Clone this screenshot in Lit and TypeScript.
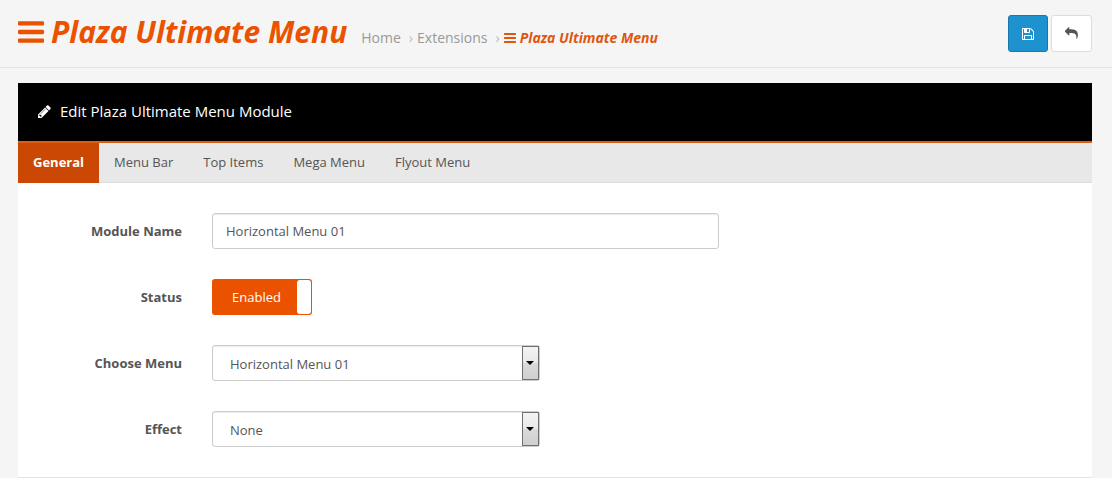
import { LitElement, html, css, svg } from "lit";
import { customElement, state } from "lit/decorators.js";

const paths = {
  bars: "M1664 1344v128q0 26-19 45t-45 19h-1408q-26 0-45-19t-19-45v-128q0-26 19-45t45-19h1408q26 0 45 19t19 45zm0-512v128q0 26-19 45t-45 19h-1408q-26 0-45-19t-19-45v-128q0-26 19-45t45-19h1408q26 0 45 19t19 45zm0-512v128q0 26-19 45t-45 19h-1408q-26 0-45-19t-19-45v-128q0-26 19-45t45-19h1408q26 0 45 19t19 45z",
  save: "M512 1536h768v-384h-768v384zm896 0h128v-896q0-14-10-38.5t-20-34.5l-281-281q-10-10-34-20t-39-10v416q0 40-28 68t-68 28h-576q-40 0-68-28t-28-68v-416h-128v1280h128v-416q0-40 28-68t68-28h832q40 0 68 28t28 68v416zm-384-928v-320q0-13-9.5-22.5t-22.5-9.5h-192q-13 0-22.5 9.5t-9.5 22.5v320q0 13 9.5 22.5t22.5 9.5h192q13 0 22.5-9.5t9.5-22.5zm640 32v928q0 40-28 68t-68 28h-1344q-40 0-68-28t-28-68v-1344q0-40 28-68t68-28h928q40 0 88 20t76 48l280 280q28 28 48 76t20 88z",
  pencil: "M491 1536l91-91-235-235-91 91v107h128v128h107zm523-928q0-22-22-22-10 0-17 7l-542 542q-7 7-7 17 0 22 22 22 10 0 17-7l542-542q7-7 7-17zm-54-192l416 416-832 832h-416v-416zm683 96q0 53-37 90l-166 166-416-416 166-165q36-38 90-38 53 0 91 38l235 234q37 39 37 91z",
  reply: "M1792 1120q0 166-127 451-3 7-10.5 24t-13.5 30-13 22q-12 17-28 17-15 0-23.5-10t-8.5-25q0-9 2.5-26.5t2.5-23.5q5-68 5-123 0-112-19.5-200.5t-54.5-153.5-90-112-117-79-141.5-49-157.5-23.5-172-6h-224v256q0 26-19 45t-45 19-45-19l-512-512q-19-19-19-45t19-45l512-512q19-19 45-19t45 19 19 45v256h224q713 0 875 403 53 134 53 333z",
};

const icon = (name: keyof typeof paths, box = "0 0 1792 1792") => html`<svg
  class="icon icon-${name}" viewBox=${box} aria-hidden="true">${svg`<path d=${paths[name]} />`}</svg>`;

const tightBox = "128 128 1536 1536";

@customElement("app-root")
export class AppRoot extends LitElement {
  @state() private tab = "General";
  @state() private enabled = true;

  private tabs = ["General", "Menu Bar", "Top Items", "Mega Menu", "Flyout Menu"];

  static styles = css`
    :host {
      display: block;
      min-height: 100vh;
      background: #f5f5f5;
      color: #555;
      font: 13px/20px "Open Sans", "Noto Sans", sans-serif;
    }
    *, *::before, *::after { box-sizing: border-box; }
    .icon { display: block; fill: currentColor; flex: none; }
    .page-header {
      display: flex;
      justify-content: space-between;
      align-items: flex-start;
      padding: 15px 20px 15px 18px;
      border-bottom: 1px solid #e5e5e5;
    }
    .heading { display: flex; align-items: baseline; gap: 14px; }
    h1 {
      margin: 0;
      font-size: 30px;
      line-height: 34px;
      font-style: italic;
      font-weight: 700;
      color: #eb5200;
    }
    h1 .icon {
      display: inline-block;
      width: 26px;
      height: 26px;
      margin-right: 7px;
      vertical-align: -2px;
    }
    .breadcrumb {
      display: flex;
      margin: 0;
      padding: 0;
      list-style: none;
      font-size: 14px;
      color: #999;
    }
    .breadcrumb li { display: flex; align-items: center; }
    .breadcrumb li + li::before {
      content: "›";
      padding: 0 4px 0 8px;
      color: #bbb;
    }
    .breadcrumb a { display: flex; align-items: center; gap: 4px; color: inherit; text-decoration: none; }
    .breadcrumb .current { color: #e0560f; font-weight: 700; font-style: italic; }
    .breadcrumb .icon { width: 12px; height: 12px; }
    .actions { display: flex; gap: 3px; }
    .btn {
      display: flex;
      align-items: center;
      justify-content: center;
      width: 41px;
      height: 37px;
      padding: 0;
      border: 1px solid #ddd;
      border-radius: 3px;
      background: #fff;
      color: #555;
    }
    .btn .icon { width: 13px; height: 13px; }
    .btn.primary { width: 40px; background: #1e91cf; border-color: #1978ab; color: #fff; }
    .btn.primary .icon { width: 12px; height: 12px; }
    .panel {
      margin: 15px 20px 0 18px;
      background: #fff;
      border-bottom: 1px solid #e4e4e4;
    }
    .panel-heading {
      display: flex;
      align-items: center;
      gap: 8px;
      padding: 18px 19px 20px;
      background: #000;
      color: #fff;
    }
    .panel-heading .icon { width: 15px; height: 15px; }
    h2 { margin: 0; font-size: 15px; line-height: 20px; font-weight: 400; }
    .tabs {
      display: flex;
      background: #e8e8e8;
      border-top: 2px solid #e05a1a;
      box-shadow: inset 0 -1px #ddd;
    }
    .tab {
      padding: 9px 15px 11px;
      border: 0;
      background: none;
      color: #555;
      font: inherit;
    }
    .tab.active { background: #cb4704; color: #fff; font-weight: 700; }
    form { display: grid; gap: 30px; padding: 30px 0; }
    .row { display: flex; align-items: center; }
    .row > label {
      width: 16.6667%;
      padding-right: 15px;
      text-align: right;
      font-weight: 700;
    }
    .field { width: 50%; padding: 0 15px; }
    .field.narrow { width: 33.3333%; }
    .control {
      display: block;
      width: 100%;
      height: 36px;
      padding: 0 13px;
      border: 1px solid #ccc;
      border-radius: 3px;
      background: #fff;
      box-shadow: inset 0 1px 1px rgba(0, 0, 0, 0.08);
      color: #555;
      font: inherit;
    }
    .select { position: relative; }
    select.control { appearance: none; padding: 2px 24px 0 17px; }
    .arrow {
      position: absolute;
      top: 1px;
      right: 1px;
      bottom: 1px;
      display: flex;
      align-items: center;
      justify-content: center;
      width: 17px;
      border: 1px solid #707070;
      background: linear-gradient(#f3f3f3, #e9e9e9 50%, #dadada 50%, #cfcfcf);
      pointer-events: none;
    }
    .arrow::before {
      content: "";
      border: 4px solid transparent;
      border-top-color: #000;
      border-bottom: 0;
    }
    .switch {
      display: flex;
      width: 100px;
      height: 36px;
      padding: 1px;
      border-radius: 3px;
      background: #eb5200;
      color: #fff;
      cursor: pointer;
    }
    .switch input { position: absolute; opacity: 0; }
    .switch .text { flex: 1; padding-left: 3px; text-align: center; line-height: 34px; }
    .switch .knob { width: 14px; border-radius: 3px; background: #fff; }
    .switch.off { flex-direction: row-reverse; background: #999; }
  `;

  private select(id: string, label: string, options: string[]) {
    return html`
      <div class="row">
        <label for=${id}>${label}</label>
        <div class="field narrow">
          <div class="select">
            <select class="control" id=${id}>${options.map((o) => html`<option>${o}</option>`)}</select>
            <span class="arrow"></span>
          </div>
        </div>
      </div>
    `;
  }

  render() {
    return html`
      <header class="page-header">
        <div class="heading">
          <h1>${icon("bars", tightBox)}<span>Plaza Ultimate Menu</span></h1>
          <ul class="breadcrumb">
            <li><a href="#">Home</a></li>
            <li><a href="#">Extensions</a></li>
            <li><a class="current" href="#">${icon("bars", tightBox)}<span>Plaza Ultimate Menu</span></a></li>
          </ul>
        </div>
        <div class="actions">
          <button class="btn primary" type="button" aria-label="Save">${icon("save", tightBox)}</button>
          <button class="btn" type="button" aria-label="Back">${icon("reply")}</button>
        </div>
      </header>
      <main class="panel">
        <div class="panel-heading">${icon("pencil")}<h2>Edit Plaza Ultimate Menu Module</h2></div>
        <div class="tabs" role="tablist">
          ${this.tabs.map((t) => html`
            <button class="tab ${t === this.tab ? "active" : ""}" type="button" role="tab"
              aria-selected=${t === this.tab} @click=${() => (this.tab = t)}>${t}</button>
          `)}
        </div>
        <form>
          <div class="row">
            <label for="name">Module Name</label>
            <div class="field"><input class="control" id="name" type="text" value="Horizontal Menu 01" /></div>
          </div>
          <div class="row">
            <label for="status">Status</label>
            <div class="field">
              <label class="switch ${this.enabled ? "" : "off"}">
                <input id="status" type="checkbox" .checked=${this.enabled}
                  @change=${(e: Event) => (this.enabled = (e.target as HTMLInputElement).checked)} />
                <span class="text">${this.enabled ? "Enabled" : "Disabled"}</span>
                <span class="knob"></span>
              </label>
            </div>
          </div>
          ${this.select("menu", "Choose Menu", ["Horizontal Menu 01"])}
          ${this.select("effect", "Effect", ["None"])}
        </form>
      </main>
    `;
  }
}
